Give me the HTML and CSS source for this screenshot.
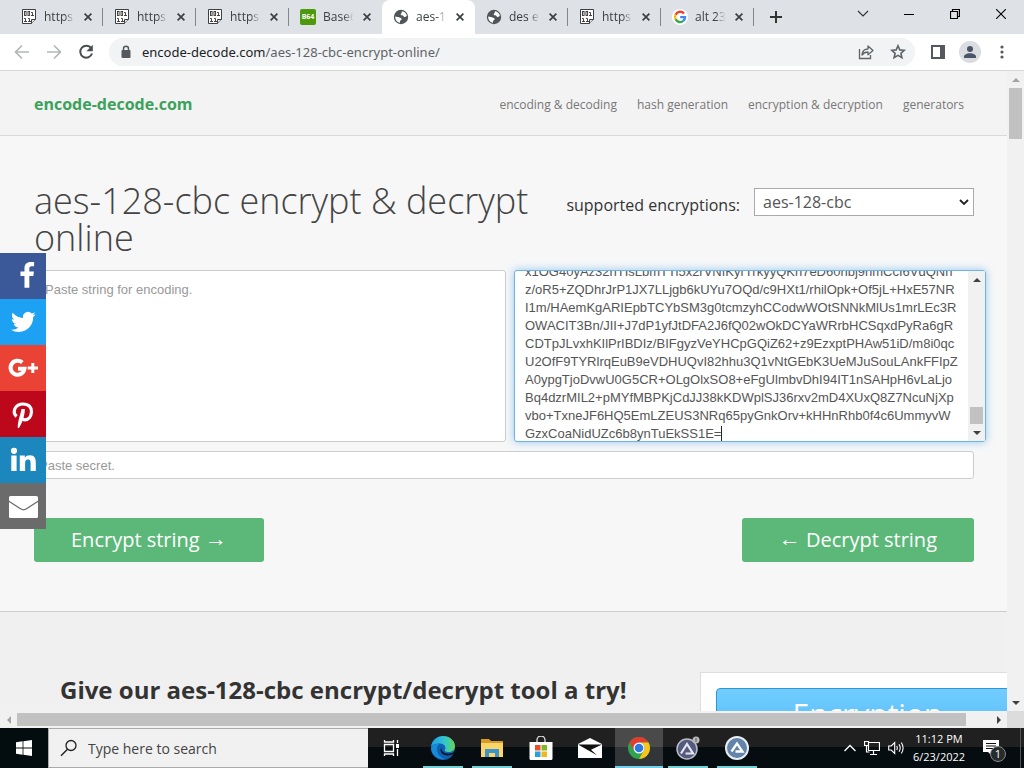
FILE: index.html
```html
<!DOCTYPE html>
<html lang="en">
<head>
<meta charset="utf-8">
<title>aes-128-cbc encrypt &amp; decrypt online</title>
<link rel="stylesheet" href="styles.css">
</head>
<body>
<svg class="defs" aria-hidden="true">
  <symbol id="i-x" viewBox="0 0 8 8"><path d="M.6.6l6.8 6.8M7.4.6L.6 7.4" stroke="#3c4043" stroke-width="1.7" fill="none"/></symbol>
  <symbol id="i-bin" viewBox="0 0 16 16"><path d="M1.500.500h13v10l-4 4h-9z" fill="#fff" stroke="#3c4043"/><path d="M14.500 10.500h-4v4" fill="#ddd" stroke="#3c4043"/><g fill="none" stroke="#333" stroke-width=".9"><rect x="3.500" y="2.500" width="1.600" height="4"/><rect x="7" y="2.500" width="1.600" height="4"/><path d="M10 3.500h1.500V6.500M10 6.500h3M3 9.500h1.500V12.500M3 12.500h3M7 9.500h1.500V12.500M7 12.500h3"/></g></symbol>
  <symbol id="i-globe" viewBox="0 0 16 16"><circle cx="8" cy="8" r="7.200" fill="#50555a"/><path d="M9 2.200c2.500.3 4.600 2.300 4.900 4.800-1 .2-1.400 1.200-2.500 1-1.200-.2-.8-1.600-2.200-1.700C7.600 6.200 7.300 5 8.200 4.400c.8-.5.300-1.300.8-2.200zM2.200 7.500c1.600.5 3 .3 4 .9 1.100.6 2.500.3 2.500 1.600 0 1.200-1.700 1.100-1.700 2.200v1.600C4.200 13.400 2.100 10.900 2.200 7.500z" fill="#fff"/></symbol>
</svg>

<header class="tabs">
  <div class="tab"><svg class="fav"><use href="#i-bin"/></svg><span class="tab-name">https:</span><button class="tab-x" aria-label="Close tab"><svg><use href="#i-x"/></svg></button></div>
  <div class="tab"><svg class="fav"><use href="#i-bin"/></svg><span class="tab-name">https:</span><button class="tab-x" aria-label="Close tab"><svg><use href="#i-x"/></svg></button></div>
  <div class="tab"><svg class="fav"><use href="#i-bin"/></svg><span class="tab-name">https:</span><button class="tab-x" aria-label="Close tab"><svg><use href="#i-x"/></svg></button></div>
  <div class="tab before"><span class="fav b64">B64</span><span class="tab-name">Base6</span><button class="tab-x" aria-label="Close tab"><svg><use href="#i-x"/></svg></button></div>
  <div class="tab active"><svg class="fav"><use href="#i-globe"/></svg><span class="tab-name">aes-1</span><button class="tab-x" aria-label="Close tab"><svg><use href="#i-x"/></svg></button></div>
  <div class="tab"><svg class="fav"><use href="#i-globe"/></svg><span class="tab-name">des e</span><button class="tab-x" aria-label="Close tab"><svg><use href="#i-x"/></svg></button></div>
  <div class="tab"><svg class="fav"><use href="#i-bin"/></svg><span class="tab-name">https:</span><button class="tab-x" aria-label="Close tab"><svg><use href="#i-x"/></svg></button></div>
  <div class="tab"><svg class="fav" viewBox="0 0 16 16"><circle cx="8" cy="8" r="8" fill="#fff"/><g fill="none" stroke-width="2.400"><path d="M12 4.500A5 5 0 0 0 3.600 5.700" stroke="#ea4335"/><path d="M3.600 5.700a5 5 0 0 0 0 4.600" stroke="#fbbc05"/><path d="M3.600 10.300a5 5 0 0 0 7.700 1.600" stroke="#34a853"/><path d="M11.300 11.900A5 5 0 0 0 13 8.100H8.200" stroke="#4285f4"/></g></svg><span class="tab-name">alt 23</span><button class="tab-x" aria-label="Close tab"><svg><use href="#i-x"/></svg></button></div>
  <button class="new-tab" aria-label="New tab"><svg width="12" height="12" viewBox="0 0 12 12"><path d="M6 0v12M0 6h12" stroke="#333" stroke-width="2"/></svg></button>
  <div class="win">
    <button aria-label="Search tabs"><svg width="12" height="8" viewBox="0 0 12 8"><path d="M1 1l5 5 5-5" fill="none" stroke="#333" stroke-width="1.200"/></svg></button>
    <button aria-label="Minimize"><svg width="10" height="10" viewBox="0 0 10 10"><path d="M0 5.500h10" stroke="#000"/></svg></button>
    <button aria-label="Restore"><svg width="10" height="10" viewBox="0 0 10 10"><path d="M.500 2.500h7v7h-7zM2.500 2.500v-2h7v7h-2" fill="none" stroke="#000" stroke-width="1.200"/></svg></button>
    <button aria-label="Close"><svg width="10" height="10" viewBox="0 0 10 10"><path d="M0 0l10 10M10 0L0 10" stroke="#000" stroke-width="1.100"/></svg></button>
  </div>
</header>

<nav class="toolbar">
  <button aria-label="Back"><svg width="16" height="16" viewBox="0 0 16 16"><path d="M15 8H2M8 1.500L1.500 8 8 14.500" fill="none" stroke="#b4b6b8" stroke-width="1.700"/></svg></button>
  <button aria-label="Forward"><svg width="16" height="16" viewBox="0 0 16 16"><path d="M1 8h13M8 1.500L14.500 8 8 14.500" fill="none" stroke="#b4b6b8" stroke-width="1.700"/></svg></button>
  <button aria-label="Reload"><svg width="16" height="16" viewBox="0 0 16 16"><path d="M13.200 4.200A6 6 0 1 0 14 9.500" fill="none" stroke="#4a4d51" stroke-width="2"/><path d="M14.800.800v6.400H8.400z" fill="#4a4d51"/></svg></button>
  <div class="omni">
    <svg width="10" height="14" viewBox="0 0 10 14"><path d="M2.500 6V3.700a2.500 2.500 0 0 1 5 0V6" fill="none" stroke="#55585c" stroke-width="1.500"/><rect x=".500" y="5" width="9" height="8" rx="1" fill="#55585c"/></svg>
    <a class="url" href="#"><b>encode-decode.com</b>/aes-128-cbc-encrypt-online/</a>
    <button aria-label="Share"><svg width="16" height="16" viewBox="0 0 16 16"><path d="M1.500 5v9.500h11V11" fill="none" stroke="#5f6368" stroke-width="1.300"/><path d="M4 11c.3-4 2.500-6 6-6V2l5 4.500-5 4.300V8C7.400 8 5.600 8.800 4 11z" fill="none" stroke="#5f6368" stroke-width="1.300" stroke-linejoin="round"/></svg></button>
    <button aria-label="Bookmark"><svg width="16" height="16" viewBox="0 0 16 16"><path d="M8 1.800l1.800 4.100 4.500.4-3.400 3 1 4.400L8 11.400l-3.900 2.300 1-4.400-3.400-3 4.500-.4z" fill="none" stroke="#5f6368" stroke-width="1.600"/></svg></button>
  </div>
  <button aria-label="Side panel"><svg width="14" height="14" viewBox="0 0 14 14"><path d="M1 1h12v12H1z" fill="none" stroke="#55585c" stroke-width="2"/><path d="M9 1h5v12H9z" fill="#55585c"/></svg></button>
  <button aria-label="Profile"><svg width="22" height="22" viewBox="0 0 22 22"><circle cx="11" cy="11" r="11" fill="#dadce0"/><circle cx="11" cy="8" r="3" fill="#4a5468"/><path d="M5 17v-1.500c0-2 3-3.300 6-3.300s6 1.300 6 3.300V17z" fill="#4a5468"/></svg></button>
  <button aria-label="Menu"><svg width="4" height="14" viewBox="0 0 4 14" fill="#55585c"><circle cx="2" cy="2" r="1.600"/><circle cx="2" cy="7" r="1.600"/><circle cx="2" cy="12" r="1.600"/></svg></button>
</nav>

<main class="browser">
  <div class="page">
    <header class="site-head">
      <a class="brand" href="#">encode-decode.com</a>
      <nav class="site-nav"><a href="#">encoding &amp; decoding</a><a href="#">hash generation</a><a href="#">encryption &amp; decryption</a><a href="#">generators</a></nav>
    </header>
    <form class="tool">
      <div class="tool-head">
        <h1>aes-128-cbc encrypt &amp; decrypt online</h1>
        <label for="enc">supported encryptions:</label>
        <div class="select-wrap"><select id="enc"><option>aes-128-cbc</option></select>
        <svg class="select-arrow" width="10" height="6" viewBox="0 0 10 6"><path d="M1 1l4 4 4-4" fill="none" stroke="#222" stroke-width="1.800"/></svg></div>
      </div>
      <div class="areas">
        <textarea class="field plain" aria-label="String for encoding" placeholder="Paste string for encoding."></textarea>
        <div class="field focus">
          <div class="clip">
<textarea class="cipher" rows="10" wrap="off" aria-label="Encrypted string" spellcheck="false">x1OG40yAz32hTIsLbmTTi5x2rVNfKyrTrkyyQKh7eD60hbj9hmCcI6VdQNh
z/oR5+ZQDhrJrP1JX7LLjgb6kUYu7OQd/c9HXt1/rhilOpk+Of5jL+HxE57NR
I1m/HAemKgARIEpbTCYbSM3g0tcmzyhCCodwWOtSNNkMlUs1mrLEc3R
OWACIT3Bn/JII+J7dP1yfJtDFA2J6fQ02wOkDCYaWRrbHCSqxdPyRa6gR
CDTpJLvxhKIlPrIBDIz/BIFgyzVeYHCpGQiZ62+z9EzxptPHAw51iD/m8i0qc
U2OfF9TYRlrqEuB9eVDHUQvI82hhu3Q1vNtGEbK3UeMJuSouLAnkFFIpZ
A0ypgTjoDvwU0G5CR+OLgOlxSO8+eFgUlmbvDhI94IT1nSAHpH6vLaLjo
Bq4dzrMIL2+pMYfMBPKjCdJJ38kKDWplSJ36rxv2mD4XUxQ8Z7NcuNjXp
vbo+TxneJF6HQ5EmLZEUS3NRq65pyGnkOrv+kHHnRhb0f4c6UmmyvW
GzxCoaNidUZc6b8ynTuEkSS1E=</textarea>
            <span class="caret"></span>
          </div>
          <div class="vbar small"><i class="up dark"></i><span class="thumb"></span><i class="down"></i></div>
        </div>
      </div>
      <input class="field secret" type="text" aria-label="Secret" placeholder="Paste secret.">
      <div class="actions"><button type="button" class="go">Encrypt string <span class="arrow">→</span></button><button type="button" class="go"><span class="arrow">←</span> Decrypt string</button></div>
    </form>
    <section class="try">
      <h2>Give our aes-128-cbc encrypt/decrypt tool a try!</h2>
      <div class="card"><div class="card-title">Encryption</div></div>
    </section>
    <aside class="social">
      <a href="#" class="fb" aria-label="Facebook"><svg viewBox="0 0 46 46"><path transform="translate(11 3) scale(1.050 1.180)" d="M22 5.160c-.406-.054-1.806-.160-3.430-.160-3.400 0-5.733 1.825-5.733 5.170v2.882H9v3.913h3.837V27h4.604V16.965h3.823l.587-3.913h-4.410v-2.500c0-1.123.347-1.903 2.198-1.903H22V5.160z"/></svg></a>
      <a href="#" class="tw" aria-label="Twitter"><svg viewBox="0 0 46 46"><path transform="translate(11 10.500) scale(1.030)" d="M23.953 4.570a10 10 0 01-2.825.775 4.958 4.958 0 002.163-2.723c-.951.555-2.005.959-3.127 1.184a4.920 4.920 0 00-8.384 4.482C7.690 8.095 4.067 6.130 1.640 3.162a4.822 4.822 0 00-.666 2.475c0 1.710.870 3.213 2.188 4.096a4.904 4.904 0 01-2.228-.616v.060a4.923 4.923 0 003.946 4.827 4.996 4.996 0 01-2.212.085 4.936 4.936 0 004.604 3.417 9.867 9.867 0 01-6.102 2.105c-.390 0-.779-.023-1.170-.067a13.995 13.995 0 007.557 2.209c9.053 0 13.998-7.496 13.998-13.985 0-.210 0-.420-.015-.630A9.935 9.935 0 0024 4.590z"/></svg></a>
      <a href="#" class="gp" aria-label="Google Plus"><svg viewBox="0 0 46 46"><path d="M22.300 17.600A7 7 0 1 0 24.500 23.800H18" fill="none" stroke="#fff" stroke-width="4"/><path d="M31.300 18h3v3.500H38v3h-3.700V28h-3v-3.500h-3.600v-3h3.600z"/></svg></a>
      <a href="#" class="pi" aria-label="Pinterest"><svg viewBox="0 0 46 46"><path d="M16.500 25.500c-5-5-1-12.500 6.500-12.500 6 0 8.800 3.800 8.500 7.800-.4 5-3.200 8-6.500 8-2.200 0-3.200-1-3.400-2.300" fill="none" stroke="#fff" stroke-width="3.200"/><path d="M21.500 18h3.300c.5 4-2.600 15-6 19.200l-1-.4c-.4-5.500 2.800-13.500 3.700-18.800z"/></svg></a>
      <a href="#" class="li" aria-label="LinkedIn"><svg viewBox="0 0 46 46"><circle cx="14" cy="13.800" r="3.100"/><path d="M11.300 18.500h5.300V34h-5.300zM19.800 18.500h5v2.200c1-1.700 2.800-2.500 5-2.500 5 0 6 3.300 6 7.600V34h-5.200v-7.400c0-1.800-.1-4-2.600-4-2.500 0-2.900 1.900-2.900 3.900V34h-5.300z"/></svg></a>
      <a href="#" class="em" aria-label="Email"><svg viewBox="0 0 46 46"><rect x="9" y="13" width="29" height="22" rx="1.500"/><path d="M8.500 18l12 7.800q3 2 6 0l12-7.800" fill="none" stroke="#6b6b6b" stroke-width="1.300"/></svg></a>
    </aside>
  </div>
  <div class="vbar main"><i class="up"></i><span class="thumb"></span><i class="down"></i></div>
  <div class="hbar"><i class="left"></i><span class="track"><span class="thumb"></span></span><i class="right"></i></div>
  <div class="corner"></div>
</main>

<footer class="taskbar">
  <button class="start" aria-label="Start"><svg width="16" height="16" viewBox="0 0 16 16" fill="#fff"><path d="M0 2.200l6.600-.9v6.300H0zM7.400 1.200L16 0v7.600H7.400zM0 8.400h6.600v6.300L0 13.800zM7.400 8.400H16V16l-8.600-1.200z"/></svg></button>
  <label class="search"><svg width="18" height="18" viewBox="0 0 18 18"><circle cx="11" cy="6.500" r="5" fill="none" stroke="#222" stroke-width="1.300"/><path d="M7.500 10.200L1 16.700" stroke="#222" stroke-width="1.400"/></svg><input type="text" placeholder="Type here to search" aria-label="Search"></label>
  <button class="app" aria-label="Task view"><svg width="18" height="18" viewBox="0 0 18 18" fill="none" stroke="#fff" stroke-width="1.300"><path d="M1.500 5.500h9v7h-9zM1.500 1v2h9V1M1.500 17v-2h9v2M14.500 1v3M14.500 10v7"/><path d="M13 5h3v4h-3z" fill="#fff" stroke="none"/></svg></button>
  <div class="apps">
  <button class="app open" aria-label="Edge"><svg width="24" height="24" viewBox="0 0 24 24"><defs><linearGradient id="eg"><stop stop-color="#1ba0e8"/><stop offset=".6" stop-color="#35c6c8"/><stop offset="1" stop-color="#63d950"/></linearGradient></defs><circle cx="12" cy="12" r="12" fill="#0f5fb5"/><path d="M0 11C1 4 6 0 12 0c7 0 12 5 12 10 0 4-3 6-6.500 6-3 0-4.500-1.200-3.500-2.500C15.500 11 13 7.500 9 7.500 5 7.500 1 9 0 11z" fill="url(#eg)"/><path d="M0 12c1-3 5-4.500 9-4.500-3 2-4 5.500-2.500 9 1 3 4 5.500 7.500 6.500A12 12 0 0 1 0 12z" fill="#168bd8"/><path d="M10.500 10.500C9 15 14 20 22 16.700L24.500 14v6L22 18c-5 3-12 1-12.500-4z" fill="#091012"/></svg></button>
  <button class="app open" aria-label="File Explorer"><svg width="22" height="20" viewBox="0 0 22 20"><path d="M0 1h8l2 2h12v16H0z" fill="#d99a28"/><path d="M0 5h22v14H0z" fill="#fbd568"/><path d="M4 11h14v8h-4v-4H8v4H4z" fill="#3d94cb"/></svg></button>
  <button class="app" aria-label="Store"><svg width="24" height="24" viewBox="0 0 24 24"><path d="M8 7V4a4 4 0 0 1 8 0v3" fill="none" stroke="#ddd" stroke-width="1.300"/><path d="M.5 6h23v16.500a1.500 1.500 0 0 1-1.500 1.500H2a1.500 1.500 0 0 1-1.500-1.500z" fill="#fff"/><path d="M6 9h5.500v5.500H6z" fill="#e8502a"/><path d="M12.500 9H18v5.500h-5.500z" fill="#7db928"/><path d="M6 15.500h5.500V21H6z" fill="#2aa1df"/><path d="M12.500 15.500H18V21h-5.500z" fill="#f3b61c"/></svg></button>
  <button class="app" aria-label="Mail"><svg width="24" height="20" viewBox="0 0 24 20"><path d="M0 6l12-6 12 6v14H0z" fill="#fff"/><path d="M0 6.500h24L13 11.800l6 5.500-8-4.500z" fill="#111"/></svg></button>
  <button class="app open current" aria-label="Chrome"><svg width="22" height="22" viewBox="0 0 22 22"><circle cx="11" cy="11" r="11" fill="#2fa34f"/><path d="M1.500 5.500A11 11 0 0 1 20.500 5.500H11L6.200 13.700z" fill="#e33b2e"/><path d="M20.500 5.500A11 11 0 0 1 11 22l4.800-8.200a5.500 5.500 0 0 0-4.800-8.300z" fill="#fbc31b"/><circle cx="11" cy="11" r="5.500" fill="#fff"/><circle cx="11" cy="11" r="4.300" fill="#2f78e4"/></svg></button>
  <button class="app open" aria-label="AutoIt"><svg width="24" height="24" viewBox="0 0 24 24"><circle cx="11" cy="13" r="10" fill="#54597e" stroke="#b9bccb" stroke-width="1.500"/><path d="M5 17.500L11 8l6 9.500H9.500" fill="none" stroke="#e4e6ef" stroke-width="2.200"/><circle cx="20" cy="4" r="3.500" fill="#b8b8b8"/><path d="M20 2v4" stroke="#555"/></svg></button>
  <button class="app open" aria-label="AutoIt editor"><svg width="24" height="24" viewBox="0 0 24 24"><circle cx="12" cy="12" r="11" fill="#6283aa" stroke="#e9edf1" stroke-width="2"/><path d="M6.500 15.500L12 7.500 17.500 15.500H10.500" fill="none" stroke="#fff" stroke-width="2.300"/></svg></button>
  </div>
  <div class="tray">
    <svg width="12" height="8" viewBox="0 0 12 8"><path d="M.500 7L6 1.500 11.500 7" fill="none" stroke="#fff" stroke-width="1.300"/></svg>
    <svg width="16" height="14" viewBox="0 0 16 14"><path d="M4.500 1.500h11v8h-11zM9.500 10v3M6 13.500h7M.500.500h4v4h-4zM2.500 5v6h3" fill="none" stroke="#fff" stroke-width="1.200"/></svg>
    <svg width="17" height="14" viewBox="0 0 17 14"><path d="M.7 5h2.500l3.500-3.500v11L3.200 9H.7zM8.700 5q1.200 2 0 4M11 3.300q2.400 3.700 0 7.400M13.300 1.500q3.600 5.500 0 11" fill="none" stroke="#fff" stroke-width="1.100"/></svg>
    <div class="clock"><span>11:12 PM</span><span>6/23/2022</span></div>
    <button class="note" aria-label="Notifications"><svg width="16" height="16" viewBox="0 0 16 16"><path d="M0 0h16v12h-7v4l-4-4H0z" fill="#fff"/><path d="M3 3.500h10M3 6h10M3 8.500h7" stroke="#111"/></svg><span class="badge">1</span></button>
  </div>
</footer>
</body>
</html>
```
FILE: styles.css
```css
* { box-sizing: border-box; }
body { margin: 0; height: 100vh; display: flex; flex-direction: column; overflow: hidden; font-family: "Open Sans", "Noto Sans", sans-serif; color: #333; }
button { border: 0; padding: 0; background: none; font: inherit; color: inherit; display: flex; align-items: center; justify-content: center; flex: none; }
a { color: inherit; text-decoration: none; }
svg { display: block; flex: none; }
.defs { display: none; }

.tabs { display: flex; flex: none; height: 34px; padding-left: 10px; background: #dee1e6; }
.tab { display: flex; align-items: center; width: 93px; padding: 0 11px 0 11px; background: linear-gradient(#80868b, #80868b) right center / 1px 18px no-repeat; }
.tab.before { background: none; border-radius: 0 0 8px 0; }
.tab.active { background: #fff; border-radius: 8px 8px 0 0; }
.fav { width: 16px; height: 16px; margin-right: 7px; }
.b64 { background: #4f9a0c; border-radius: 2px; color: #fff; font-weight: 700; font-size: 7px; line-height: 16px; text-align: center; }
.tab-name { width: 34px; margin-right: 6px; overflow: hidden; white-space: nowrap; font-size: 12px; line-height: 16px; color: #3c4043; -webkit-mask-image: linear-gradient(90deg, #000 60%, transparent 90%); mask-image: linear-gradient(90deg, #000 60%, transparent 90%); }
.tab-x, .tab-x svg { width: 8px; height: 8px; }
.new-tab { width: 44px; }
.win { display: flex; margin-left: auto; height: 28px; }
.win button { width: 46px; }

.toolbar { display: flex; align-items: center; flex: none; height: 37px; padding: 0 6px; background: #fff; border-bottom: 1px solid #d5d6d8; }
.toolbar button { width: 32px; height: 32px; }
.omni { flex: 1; display: flex; align-items: center; height: 28px; margin: 0 7px; padding: 0 1px 0 12px; border-radius: 14px; background: #f1f3f4; }
.url { flex: 1; margin-left: 11px; font-family: "Noto Sans", sans-serif; font-size: 13px; line-height: 20px; color: #5f6368; }
.url b { font-weight: 400; color: #202124; }

.browser { flex: 1; min-height: 0; display: grid; grid-template-columns: minmax(0, 1fr) 17px; grid-template-rows: minmax(0, 1fr) 17px; }
.page { position: relative; overflow: hidden; background: #f0f0f0; }
.site-head { display: flex; align-items: center; justify-content: space-between; height: 65px; padding: 2px 43px 0 34px; background: #f3f3f3; border-bottom: 1px solid #d9d9d9; }
.brand { font-size: 16px; font-weight: 700; color: #3ba15c; }
.site-nav { display: flex; gap: 20px; font-size: 12px; color: #777; }
.tool { padding: 46px 33px 49px 34px; background: #f7f7f7; border-bottom: 1px solid #ccc; }
.tool-head { display: flex; align-items: flex-start; }
h1 { flex: 1; margin: 0 0 14px; font-size: 36px; line-height: 37px; font-weight: 300; color: #444; }
.tool-head label { margin: 11px 14px 0 0; font-size: 16px; line-height: 24px; }
.select-wrap { position: relative; margin-top: 6px; width: 220px; }
.select-wrap select { appearance: none; display: block; width: 100%; height: 28px; padding: 0 8px; border: 1px solid #aaa; border-radius: 0; background: #fff; font: 16px/24px "Open Sans", sans-serif; color: #555; }
.select-arrow { position: absolute; right: 5px; top: 11px; pointer-events: none; }
.areas { display: grid; grid-template-columns: 1fr 1fr; gap: 8px; margin-right: -12px; }
.field { display: block; width: 100%; border: 1px solid #ccc; border-radius: 3px; background: #fff; font: 13px/18px "Liberation Sans", Arial, sans-serif; color: #555; }
.field::placeholder { color: #999; }
.plain { height: 172px; padding: 10px; resize: none; }
.focus { display: flex; height: 172px; border-color: #6fb3e0; box-shadow: 0 0 8px rgba(82, 168, 236, .6); }
.clip { position: relative; flex: 1; min-width: 0; overflow: hidden; display: flex; align-items: flex-end; }
.cipher { display: block; width: 100%; flex: none; height: 180px; margin-bottom: -2px; padding: 0 0 0 10px; border: 0; outline: 0; resize: none; overflow: hidden; background: none; font: inherit; color: inherit; }
.caret { position: absolute; left: 206px; bottom: 0; width: 1px; height: 15px; background: #222; }
.secret { height: 28px; margin-top: 9px; padding: 0 4px; }
.actions { display: flex; justify-content: space-between; margin-top: 39px; }
.go { height: 44px; padding: 0 37px 2px; border-radius: 3px; background: #5cb878; color: #fff; font-size: 20px; white-space: pre; }
.arrow { font-family: "Liberation Serif", serif; font-size: 22px; line-height: 24px; }
.try { display: flex; justify-content: space-between; padding: 60px 0 0 60px; margin-right: -28px; }
h2 { margin: 2px 0 0; font-size: 24px; line-height: 32px; white-space: nowrap; }
.card { flex: none; width: 335px; padding: 15px; background: #fff; border: 1px solid #ddd; }
.card-title { height: 60px; border: 1px solid #2f97cf; border-radius: 4px; background: linear-gradient(#72cdff, #4fb8f5); color: #fff; font-size: 30px; line-height: 50px; text-align: center; }
.social { position: absolute; left: 0; top: 182px; }
.social a, .social svg { display: block; width: 46px; height: 46px; fill: #fff; }
.fb { background: #3b5998; }
.tw { background: #1da1f2; }
.gp { background: #ea4335; }
.pi { background: #bd081c; }
.li { background: #1c87bd; }
.em { background: #6b6b6b; }

.vbar { display: flex; flex-direction: column; align-items: center; width: 17px; background: #f1f1f1; }
.vbar .thumb { width: 13px; background: #c1c1c1; }
.main .thumb { height: 8%; }
.small .thumb { height: 17px; margin-top: auto; }
.main .down { margin-top: auto; }
i { flex: none; width: 17px; height: 17px; display: flex; align-items: center; justify-content: center; }
i::before { content: ""; border: 4px solid transparent; }
.up::before { border-top: 0; border-bottom-color: #a3a3a3; }
.up.dark::before { border-bottom-color: #404040; }
.down::before { border-bottom: 0; border-top-color: #404040; }
.left::before { border-left: 0; border-right-color: #a3a3a3; }
.right::before { border-right: 0; border-left-color: #404040; }
.hbar { display: flex; align-items: center; background: #f1f1f1; }
.track { flex: 1; }
.hbar .thumb { display: block; width: 97.5%; height: 13px; background: #c1c1c1; }
.corner { background: #dcdcdc; }

.taskbar { display: flex; flex: none; height: 40px; background: linear-gradient(#202020 0 19px, #060d10 19px); color: #fff; }
.start { width: 48px; background: #030c0e; }
.search { display: flex; align-items: center; flex: 0 1 320px; padding-left: 11px; gap: 10px; background: #f1f1f1; border: 1px solid #aaa; border-right: 0; }
.search input { flex: 1; min-width: 0; padding: 2px 0 0; border: 0; outline: 0; background: none; font: 14px/20px "Open Sans", sans-serif; }
.search input::placeholder { color: #444; }
.app { width: 48px; height: 40px; }
.apps { display: flex; gap: 1px; margin-left: 3px; }
.open { background: linear-gradient(#76cfd2, #76cfd2) center bottom / 40px 2px no-repeat; }
.current { background: linear-gradient(#76cfe8, #76cfe8) center bottom / 100% 2px no-repeat, linear-gradient(#4a4a4a 0 19px, #323638 19px); }
.tray { display: flex; align-items: center; margin-left: auto; gap: 8px; padding-right: 3px; }
.clock { display: flex; flex-direction: column; align-items: center; width: 52px; font-size: 11px; line-height: 18px; white-space: nowrap; }
.note { position: relative; width: 48px; height: 40px; padding-right: 12px; border-right: 1px solid #555; }
.badge { position: absolute; left: 17px; top: 18px; width: 16px; height: 16px; border-radius: 50%; border: 1px solid #888; background: #262b2d; font-size: 11px; line-height: 14px; text-align: center; }
```
